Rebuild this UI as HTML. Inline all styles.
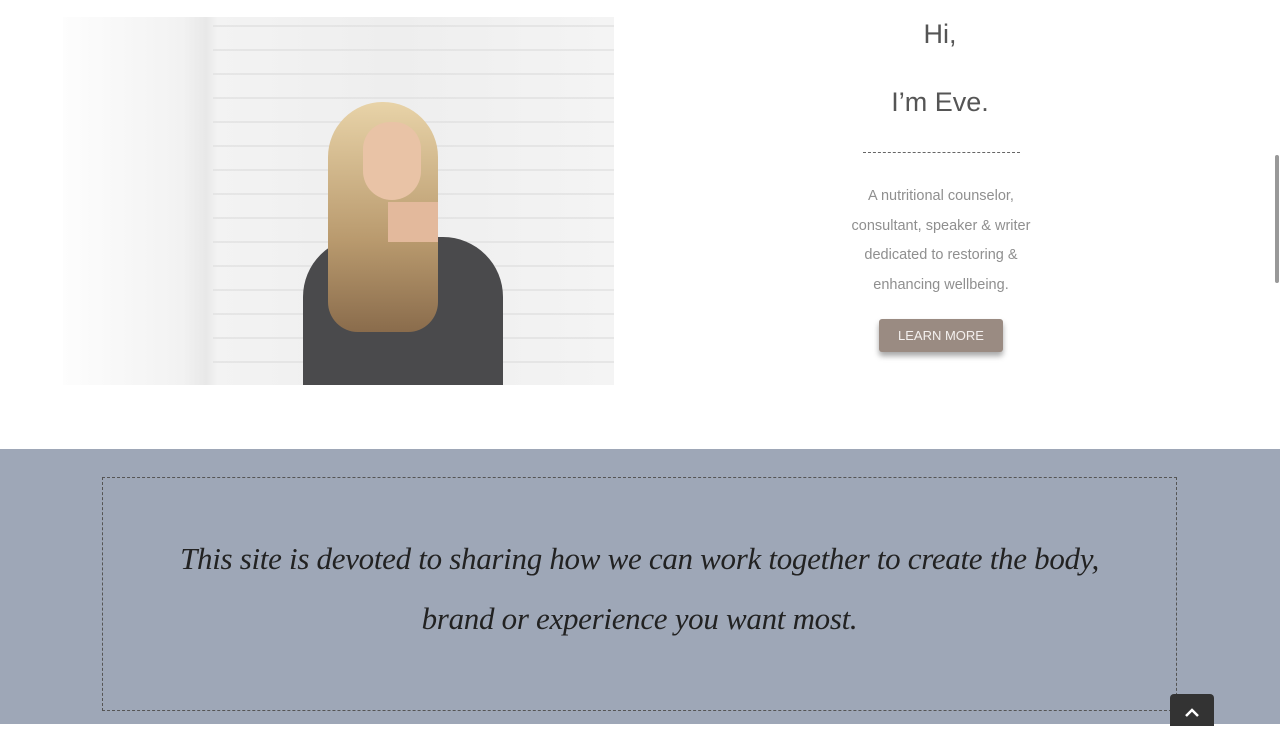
<!DOCTYPE html>
<html><head><style>
*{margin:0;padding:0;box-sizing:border-box}
body{width:1280px;height:724px;overflow:hidden;background:#fff;position:relative;font-family:"Liberation Sans",sans-serif}
.photo{position:absolute;left:63px;top:17px;width:551px;height:368px;background:linear-gradient(90deg,#fafafa 0,#f6f6f6 20%,#e8e8e8 26%,#f3f3f3 28%,#eeeeee 60%,#f4f4f4 100%);overflow:hidden}
.bricks{position:absolute;left:150px;top:0;width:401px;height:368px;background-image:repeating-linear-gradient(0deg,transparent 0 22px,#e2e2e2 22px 24px);opacity:.8}
.sec{position:absolute;top:449px;left:0;width:1280px;height:275px;background:#9ea7b7}
.box{position:absolute;left:102px;top:477px;width:1075px;height:234px;border:1px dashed #555}
.quote{position:absolute;left:102px;width:1075px;text-align:center;font-family:"Liberation Serif",serif;font-style:italic;font-size:31px;color:#222;letter-spacing:-0.3px}
.t{position:absolute;text-align:center;color:#333}
</style></head><body>
<div class="photo">
<div class="bricks"></div>
<div style="position:absolute;left:0;top:0;width:120px;height:368px;background:linear-gradient(90deg,#fdfdfd,#f2f2f2)"></div>
<div style="position:absolute;left:240px;top:220px;width:200px;height:160px;background:#4a4a4c;border-radius:60px 60px 0 0"></div>
<div style="position:absolute;left:265px;top:85px;width:110px;height:230px;background:linear-gradient(180deg,#e8d3a8,#b99a6e 60%,#8a6c4c);border-radius:55px 55px 30px 30px"></div>
<div style="position:absolute;left:300px;top:105px;width:58px;height:78px;background:#e9c3a6;border-radius:28px 28px 30px 30px"></div>
<div style="position:absolute;left:325px;top:185px;width:50px;height:40px;background:#e3b99c"></div>
</div>
<div style="position:absolute;left:1275px;top:155px;width:4px;height:128px;background:#999;border-radius:2px"></div>
<div class="t" style="left:840px;top:19px;width:200px;font-size:27px;color:#555">Hi,</div>
<div class="t" style="left:840px;top:87px;width:200px;font-size:27px;color:#555">I’m Eve.</div>
<div style="position:absolute;left:863px;top:152px;width:157px;border-top:1px dashed #666"></div>
<div class="t" style="left:820px;top:182px;width:242px;font-size:14.5px;line-height:29.5px;color:#8f8f8f">A nutritional counselor,<br>consultant, speaker &amp; writer<br>dedicated to restoring &amp;<br>enhancing wellbeing.</div>
<div style="position:absolute;left:879px;top:319px;width:124px;height:33px;background:#9a8b82;border-radius:3px;box-shadow:0 4px 6px rgba(0,0,0,.35);color:#f4f0ee;font-size:13px;text-align:center;line-height:33px">LEARN MORE</div>
<div class="sec"></div>
<div class="box"></div>
<div class="quote" style="top:541px">This site is devoted to sharing how we can work together to create the body,</div>
<div class="quote" style="top:601px">brand or experience you want most.</div>
<div style="position:absolute;left:1170px;top:694px;width:44px;height:32px;background:#333;border-radius:4px 4px 0 0"><svg width="44" height="30" viewBox="0 0 44 30"><path d="M16 22 L22 16 L28 22" stroke="#fff" stroke-width="2.5" fill="none"/></svg></div>
</body></html>
